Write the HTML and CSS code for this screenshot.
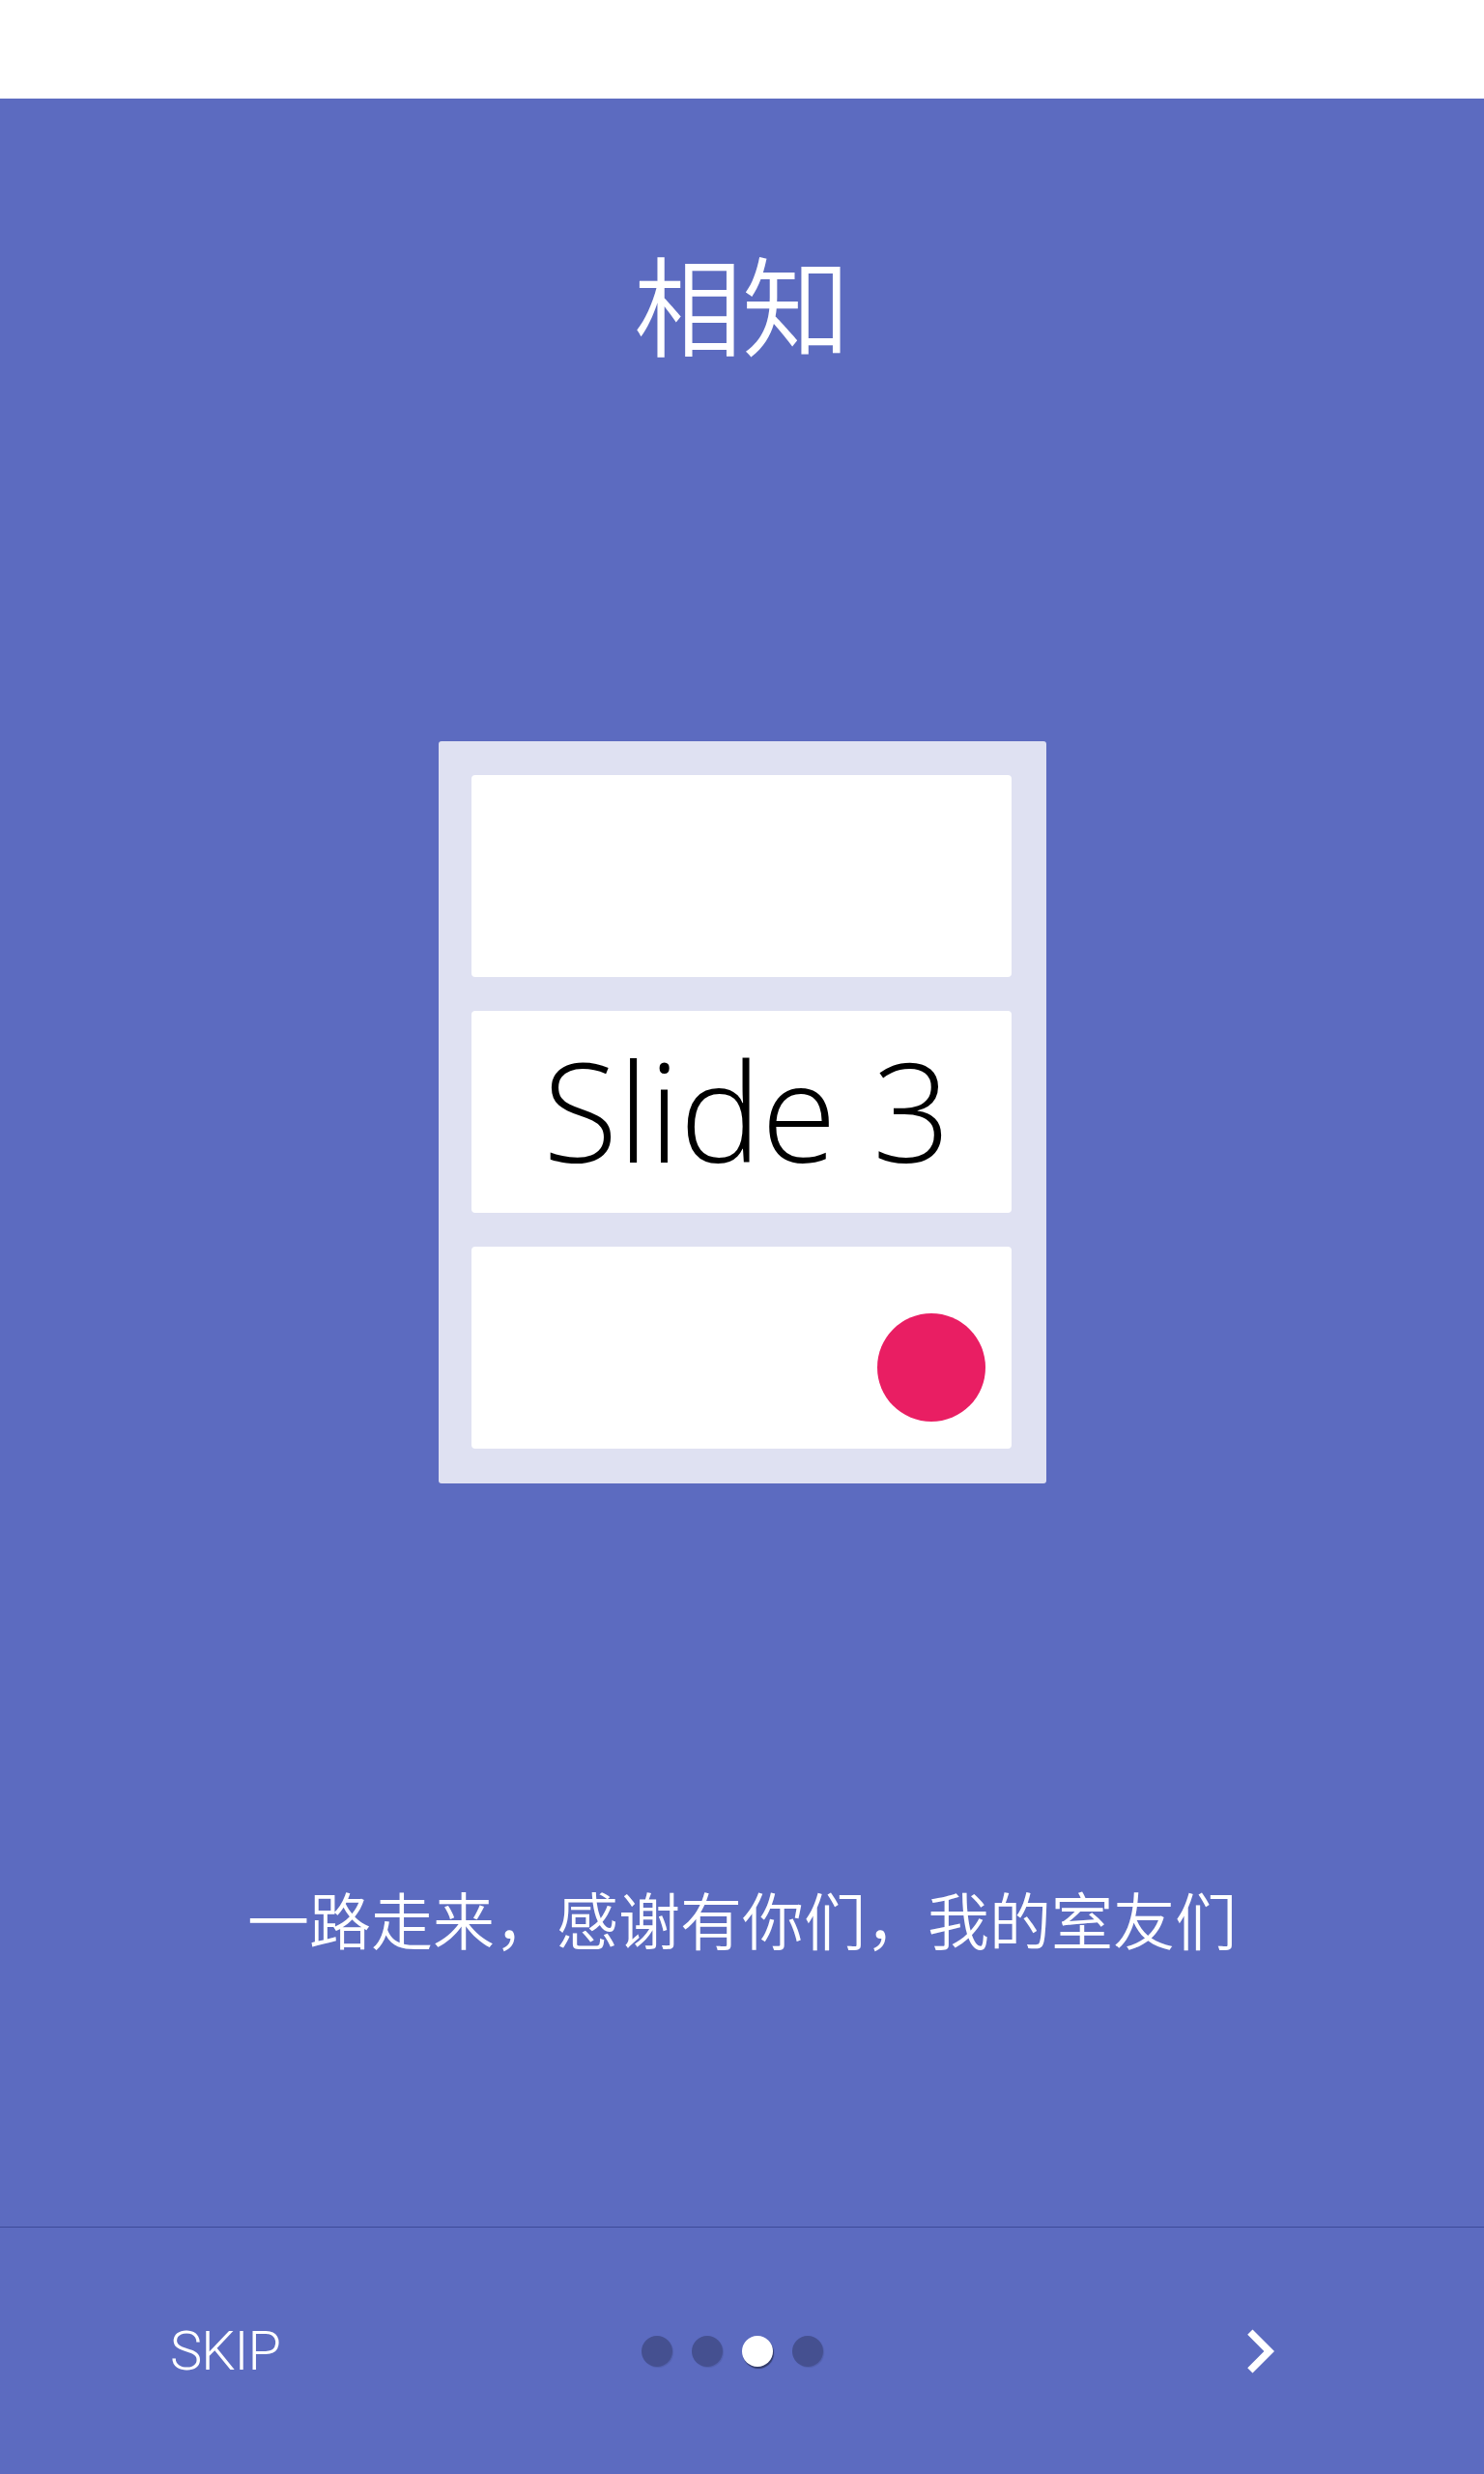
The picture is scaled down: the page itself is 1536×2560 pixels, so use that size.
FILE: index.html
```html
<!DOCTYPE html>
<html lang="zh">
<head>
<meta charset="utf-8">
<title>相知</title>
<link rel="stylesheet" href="styles.css">
</head>
<body>
<div class="statusbar"></div>
<main class="slide">
  <h1 class="title">相知</h1>
  <div class="card">
    <div class="panel"></div>
    <div class="panel panel-text">Slide 3</div>
    <div class="panel panel-fab"><span class="fab"></span></div>
  </div>
  <p class="desc">一路走来，感谢有你们，我的室友们</p>
</main>
<footer class="bottombar">
  <div class="skip">SKIP</div>
  <div class="dots">
    <span class="dot"></span>
    <span class="dot"></span>
    <span class="dot active"></span>
    <span class="dot"></span>
  </div>
  <div class="next">
    <svg width="90" height="90" viewBox="0 0 24 24"><path d="M10 6L8.59 7.41 13.17 12l-4.58 4.59L10 18l6-6z" fill="#ffffff"/></svg>
  </div>
</footer>
</body>
</html>
```
FILE: styles.css
```css
html, body {
  margin: 0;
  padding: 0;
}
body {
  width: 1536px;
  height: 2560px;
  background: #5c6bc0;
  font-family: "Noto Sans CJK SC", "Noto Sans", sans-serif;
  color: #ffffff;
  overflow: hidden;
}
.statusbar {
  height: 102px;
  background: #ffffff;
}
.slide {
  height: 2202px;
  display: flex;
  flex-direction: column;
  align-items: center;
  padding-top: 154px;
  box-sizing: border-box;
}
.title {
  margin: 0;
  font-size: 112px;
  line-height: 112px;
  font-weight: 350;
}
.card {
  margin-top: 399px;
  width: 629px;
  height: 768px;
  box-sizing: border-box;
  padding: 35px 36px 35px 34px;
  background: #dfe1f2;
  border-radius: 3px;
  display: flex;
  flex-direction: column;
  gap: 35px;
}
.panel {
  height: 209px;
  background: #ffffff;
  border-radius: 4px;
  flex: none;
}
.panel-text {
  display: flex;
  align-items: center;
  justify-content: center;
  padding: 0 0 6px 12px;
  box-sizing: border-box;
  font-family: "Open Sans", sans-serif;
  font-weight: 300;
  font-size: 142px;
  line-height: 1;
  color: #000000;
}
.panel-fab {
  display: flex;
  justify-content: flex-end;
  align-items: flex-end;
  padding: 0 27px 28px 0;
  box-sizing: border-box;
}
.fab {
  width: 112px;
  height: 112px;
  border-radius: 50%;
  background: #e91e63;
}
.desc {
  margin: 417px 0 0;
  font-size: 64px;
  line-height: 64px;
  font-weight: 350;
}
.bottombar {
  border-top: 1px solid #3d4b99;
  height: 255px;
  display: flex;
  align-items: center;
  padding-left: 176px;
}
.skip {
  width: 488px;
  font-family: "Roboto", sans-serif;
  font-weight: 300;
  font-size: 56px;
  letter-spacing: -1px;
}
.dots {
  display: flex;
  gap: 20px;
}
.dot {
  width: 32px;
  height: 32px;
  border-radius: 50%;
  background: rgba(0, 0, 0, 0.25);
  box-shadow: 1px 1px 1px rgba(0, 0, 0, 0.1);
}
.dot.active {
  background: #ffffff;
  box-shadow: 1px 2px 1px rgba(0, 0, 0, 0.45);
}
.next {
  margin-left: 407px;
  width: 90px;
  height: 90px;
}
.next svg {
  display: block;
}
```
